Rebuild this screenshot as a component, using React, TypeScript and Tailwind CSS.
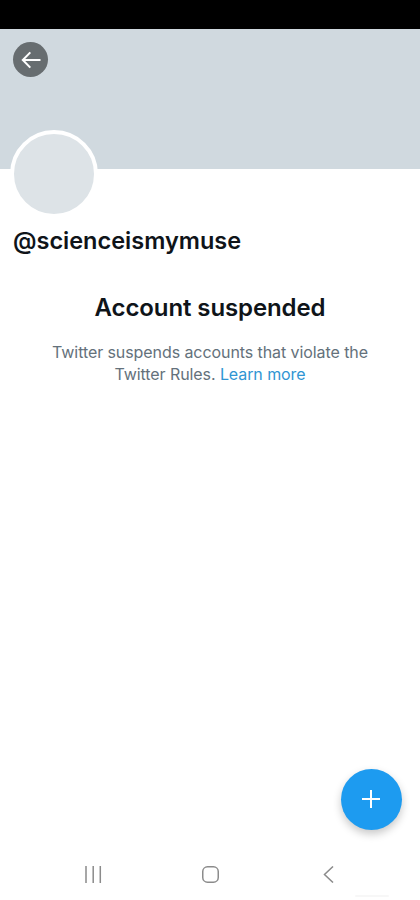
interface AccountNoticeProps {
  title: string;
  lines: [string, string];
  linkLabel: string;
}

function BackButton() {
  return (
    <button
      type="button"
      aria-label="Back"
      className="ml-[13px] mt-[13px] flex size-[35px] items-center justify-center rounded-full bg-[#676d70]"
    >
      <svg
        viewBox="0 0 20 18"
        className="h-[18px] w-5"
        fill="none"
        stroke="white"
        strokeWidth="2"
      >
        <path d="M19.5 9H2M9.3 1.4 1.8 9l7.5 7.6" />
      </svg>
    </button>
  );
}

function AccountNotice({ title, lines, linkLabel }: AccountNoticeProps) {
  return (
    <section className="mt-[35px] px-10 text-center">
      <h2 className="text-[24px] font-semibold leading-8 tracking-[-0.1px] text-[#0f1419]">
        {title}
      </h2>
      <p className="mt-[17px] text-[16px] leading-[22px] tracking-[-0.08px] text-[#64717b]">
        <span className="block">{lines[0]}</span>
        <span>{lines[1]}</span>{' '}
        <a href="#" className="text-[#3095d3]">
          {linkLabel}
        </a>
      </p>
    </section>
  );
}

function ComposeButton() {
  return (
    <button
      type="button"
      aria-label="Compose"
      className="mr-[18px] flex size-[61.5px] items-center justify-center self-end rounded-full bg-[#1d9bf0] shadow-[0_4px_8px_rgba(0,0,0,0.22)]"
    >
      <svg viewBox="0 0 18 18" className="size-[18px]" stroke="white" strokeWidth="2">
        <path d="M9 0v18M0 9h18" />
      </svg>
    </button>
  );
}

function SystemNav() {
  return (
    <nav className="mt-9 flex h-[17px] items-center justify-between pl-[85px] pr-[86px]">
      <svg viewBox="0 0 17 17" className="size-[17px]" stroke="#8b8b8b" strokeWidth="1.5">
        <path d="M1 0v17M8.2 0v17M15.3 0v17" />
      </svg>
      <svg
        viewBox="0 0 17 17"
        className="mr-1 size-[17px]"
        fill="none"
        stroke="#8b8b8b"
        strokeWidth="1.5"
      >
        <rect x="0.75" y="0.75" width="15.5" height="15.5" rx="4.8" />
      </svg>
      <svg
        viewBox="0 0 11 17"
        className="h-[17px] w-[11px]"
        fill="none"
        stroke="#8b8b8b"
        strokeWidth="1.5"
      >
        <path d="M10 .5 1.5 8.5l8.5 8" />
      </svg>
    </nav>
  );
}

export default function App() {
  return (
    <div className="flex h-[900px] w-[420px] flex-col overflow-hidden bg-white font-['Inter','Liberation_Sans',sans-serif]">
      <div className="h-[29px] shrink-0 bg-black" />
      <header className="flex h-[140px] shrink-0 items-start bg-[#d0d9df]">
        <BackButton />
      </header>
      <div className="-mt-[39px] ml-[10px] size-[88px] shrink-0 rounded-full border-4 border-white bg-[#dde3e7]" />
      <h1 className="ml-[13px] mt-[7px] text-[23.5px] font-semibold leading-8 text-[#0f1419]">
        @scienceismymuse
      </h1>
      <AccountNotice
        title="Account suspended"
        lines={['Twitter suspends accounts that violate the', 'Twitter Rules.']}
        linkLabel="Learn more"
      />
      <div className="mt-auto flex flex-col">
        <ComposeButton />
        <SystemNav />
        <div className="mb-[3px] ml-[355px] mt-3 h-[2px] w-[34px] rounded-full bg-[#f7f7f7]" />
      </div>
    </div>
  );
}
